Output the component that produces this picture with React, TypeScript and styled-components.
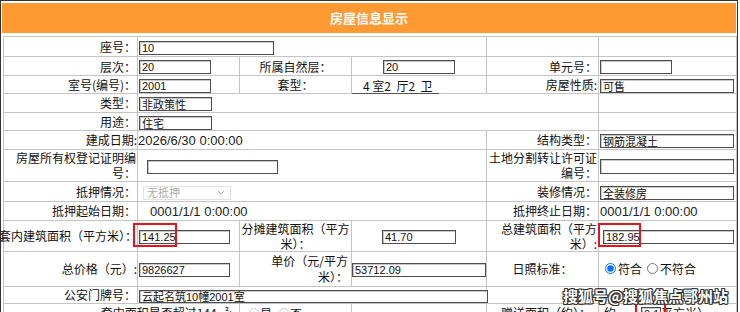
import { createGlobalStyle, styled } from 'styled-components'

const GlobalStyle = createGlobalStyle`
  html, body {
    margin: 0;
    padding: 0;
    background: #fff;
  }
  body {
    font-family: "Noto Sans CJK SC", "Liberation Sans", sans-serif;
    overflow: hidden;
  }
`

const Page = styled.div`
  position: relative;
  width: 734px;
  padding: 2px 1px 0;
  border: 1px solid #333;
  border-bottom: none;
`

const Title = styled.div`
  height: 30px;
  line-height: 30px;
  background: #ff9a33;
  color: #fff;
  font-size: 13px;
  font-weight: bold;
  text-align: center;
`

const Grid = styled.table`
  width: 733px;
  margin: 3px 0 0 1px;
  border-collapse: collapse;
  table-layout: fixed;
  font-size: 12px;
  color: #111;
`

const Row = styled.tr<{ $h: number }>`
  height: ${p => p.$h}px;
`

type Align = 'left' | 'right' | 'center'

const Cell = styled.td<{ $align?: Align; $lh?: number; $pl?: number; $pr?: number; $valign?: 'middle' | 'bottom' }>`
  border: 1px solid #c4c4c4;
  padding: 0 ${p => p.$pr ?? 1}px 0 ${p => p.$pl ?? 1}px;
  text-align: ${p => p.$align ?? 'left'};
  vertical-align: ${p => p.$valign ?? 'middle'};
  line-height: ${p => p.$lh ?? 15}px;
  white-space: nowrap;
`

const Overflow = styled.span`
  display: inline-block;
  margin-left: -6px;
`

const Field = styled.input<{ $w: number; $ml?: number; $h?: number }>`
  box-sizing: border-box;
  width: ${p => p.$w}px;
  height: ${p => p.$h ?? 14}px;
  margin: 0 0 0 ${p => p.$ml ?? 0}px;
  padding: 0 2px;
  border: 1px solid #4d4d4d;
  box-shadow: inset 1px 1px 0 #c8c8c8;
  background: #fff;
  color: #111;
  font: 11px "Liberation Sans", "Noto Sans CJK SC", sans-serif;
  vertical-align: middle;
  outline: none;
`

const DateText = styled.span`
  font: 13px "Liberation Sans", sans-serif;
  color: #222;
`

const Rooms = styled.span`
  display: inline-block;
  padding: 0 7px 0 11px;
  margin-bottom: -1px;
  border-bottom: 1px solid #555;
  font-size: 12px;
  line-height: 14px;
  vertical-align: bottom;
`

const SelectBox = styled.div`
  display: inline-flex;
  align-items: center;
  justify-content: space-between;
  box-sizing: border-box;
  width: 88px;
  height: 14px;
  margin-left: 4px;
  padding: 0 5px 0 3px;
  border: 1px solid #e2e2e2;
  color: #aaa;
  font-size: 11px;
  vertical-align: middle;
`

const Choice = styled.label`
  display: inline-flex;
  align-items: center;
  font-size: 12px;
`

const Radio = styled.input<{ $size?: number; $ml?: number }>`
  width: ${p => p.$size ?? 11}px;
  height: ${p => p.$size ?? 11}px;
  margin: 0 ${p => (p.$size ?? 11) > 10 ? 2 : 1}px 0 ${p => p.$ml ?? 5}px;
`

const Mark = styled.div<{ $x: number; $y: number; $w: number; $h: number }>`
  position: absolute;
  left: ${p => p.$x}px;
  top: ${p => p.$y}px;
  width: ${p => p.$w}px;
  height: ${p => p.$h}px;
  box-sizing: border-box;
  border: 2px solid #e8141b;
  pointer-events: none;
`

const Watermark = styled.div`
  position: absolute;
  left: 562px;
  top: 286px;
  font: bold 15px/18px "Noto Sans CJK SC", sans-serif;
  color: #fff;
  white-space: nowrap;
  text-shadow: 1px 0 0 #333, -1px 0 0 #333, 0 1px 0 #333, 0 -1px 0 #333,
    1px 1px 0 #333, -1px -1px 0 #333, 1px -1px 0 #333, -1px 1px 0 #333;
`

function Chevron() {
  return (
    <svg width="8" height="5" viewBox="0 0 8 5">
      <polyline points="1,1 4,4 7,1" fill="none" stroke="#aaa" strokeWidth="1" />
    </svg>
  )
}

export default function App() {
  return (
    <>
      <GlobalStyle />
      <Page>
        <Title>房屋信息显示</Title>
        <Grid>
          <colgroup>
            <col style={{ width: 134 }} />
            <col style={{ width: 102 }} />
            <col style={{ width: 112 }} />
            <col style={{ width: 135 }} />
            <col style={{ width: 112 }} />
            <col style={{ width: 138 }} />
          </colgroup>
          <tbody>
            <Row $h={20}>
              <Cell $align="right">座号：</Cell>
              <Cell colSpan={3}><Field $w={135} value="10" readOnly /></Cell>
              <Cell />
              <Cell />
            </Row>
            <Row $h={19}>
              <Cell $align="right">层次：</Cell>
              <Cell><Field $w={72} value="20" readOnly /></Cell>
              <Cell $align="center">所属自然层：</Cell>
              <Cell $align="center"><Field $w={72} value="20" readOnly /></Cell>
              <Cell $align="right">单元号：</Cell>
              <Cell><Field $w={72} value="" readOnly /></Cell>
            </Row>
            <Row $h={17}>
              <Cell $align="right">室号(编号)：</Cell>
              <Cell><Field $w={72} value="2001" readOnly /></Cell>
              <Cell $align="center">套型：</Cell>
              <Cell $pl={0} $valign="bottom">
                <Rooms>4 室2&nbsp;&nbsp;厅2&nbsp;&nbsp;卫</Rooms>
              </Cell>
              <Cell $align="right">房屋性质:</Cell>
              <Cell><Field $w={134} value="可售" readOnly /></Cell>
            </Row>
            <Row $h={19}>
              <Cell $align="right">类型：</Cell>
              <Cell colSpan={4}><Field $w={73} value="非政策性" readOnly /></Cell>
              <Cell />
            </Row>
            <Row $h={18}>
              <Cell $align="right">用途：</Cell>
              <Cell colSpan={4}><Field $w={73} value="住宅" readOnly /></Cell>
              <Cell />
            </Row>
            <Row $h={19}>
              <Cell $align="right" $pr={0}>建成日期:</Cell>
              <Cell colSpan={3} $pl={0}><DateText>2026/6/30 0:00:00</DateText></Cell>
              <Cell $align="right">结构类型：</Cell>
              <Cell><Field $w={134} value="钢筋混凝土" readOnly /></Cell>
            </Row>
            <Row $h={32}>
              <Cell $align="right">房屋所有权登记证明编<br />号：</Cell>
              <Cell colSpan={3}><Field $w={131} $ml={8} value="" readOnly /></Cell>
              <Cell $align="right">土地分割转让许可证<br />编号：</Cell>
              <Cell><Field $w={134} $h={15} value="" readOnly /></Cell>
            </Row>
            <Row $h={20}>
              <Cell $align="right">抵押情况：</Cell>
              <Cell colSpan={3}>
                <SelectBox>无抵押<Chevron /></SelectBox>
              </Cell>
              <Cell $align="right">装修情况：</Cell>
              <Cell><Field $w={134} value="全装修房" readOnly /></Cell>
            </Row>
            <Row $h={19}>
              <Cell $align="right">抵押起始日期：</Cell>
              <Cell colSpan={3} $pl={12}><DateText>0001/1/1 0:00:00</DateText></Cell>
              <Cell $align="right">抵押终止日期：</Cell>
              <Cell><DateText>0001/1/1 0:00:00</DateText></Cell>
            </Row>
            <Row $h={31}>
              <Cell><Overflow>套内建筑面积（平方米）：</Overflow></Cell>
              <Cell><Field $w={91} value="141.25" readOnly /></Cell>
              <Cell $align="center" $lh={15}>分摊建筑面积（平方<br />米）：</Cell>
              <Cell $align="center"><Field $w={74} value="41.70" readOnly /></Cell>
              <Cell $align="right" $lh={15}>总建筑面积（平方<br />米）:</Cell>
              <Cell><Field $w={131} $ml={3} value="182.95" readOnly /></Cell>
            </Row>
            <Row $h={35}>
              <Cell $align="right" $pr={0}>总价格（元）:</Cell>
              <Cell><Field $w={91} value="9826627" readOnly /></Cell>
              <Cell $align="right" $lh={16} $pr={3}>单价（元/平方<br />米）：</Cell>
              <Cell $pl={0}><Field $w={134} value="53712.09" readOnly /></Cell>
              <Cell $align="center">日照标准：</Cell>
              <Cell>
                <Choice><Radio type="radio" name="sun" defaultChecked />符合</Choice>
                <Choice><Radio type="radio" name="sun" />不符合</Choice>
              </Cell>
            </Row>
            <Row $h={16}>
              <Cell $align="right">公安门牌号：</Cell>
              <Cell colSpan={3}><Field $w={349} $h={13} value="云起名筑10幢2001室" readOnly /></Cell>
              <Cell />
              <Cell />
            </Row>
            <Row $h={19}>
              <Cell colSpan={2} $align="right" $pr={7}>套内面积是否超过144㎡:</Cell>
              <Cell>
                <Choice><Radio type="radio" name="over" $size={10} $ml={8} disabled />是</Choice>
                <Choice><Radio type="radio" name="over" $size={10} $ml={7} disabled />否</Choice>
              </Cell>
              <Cell />
              <Cell $align="right" $pr={7}>赠送面积（约）：</Cell>
              <Cell $pl={5}>约<Field $w={20} $ml={25} value="0.1" readOnly />平方米）</Cell>
            </Row>
          </tbody>
        </Grid>
        <Mark $x={132} $y={222} $w={44} $h={24} />
        <Mark $x={597} $y={222} $w={43} $h={24} />
        <Mark $x={634} $y={301} $w={31} $h={24} />
        <Watermark>搜狐号@搜狐焦点鄂州站</Watermark>
      </Page>
    </>
  )
}
